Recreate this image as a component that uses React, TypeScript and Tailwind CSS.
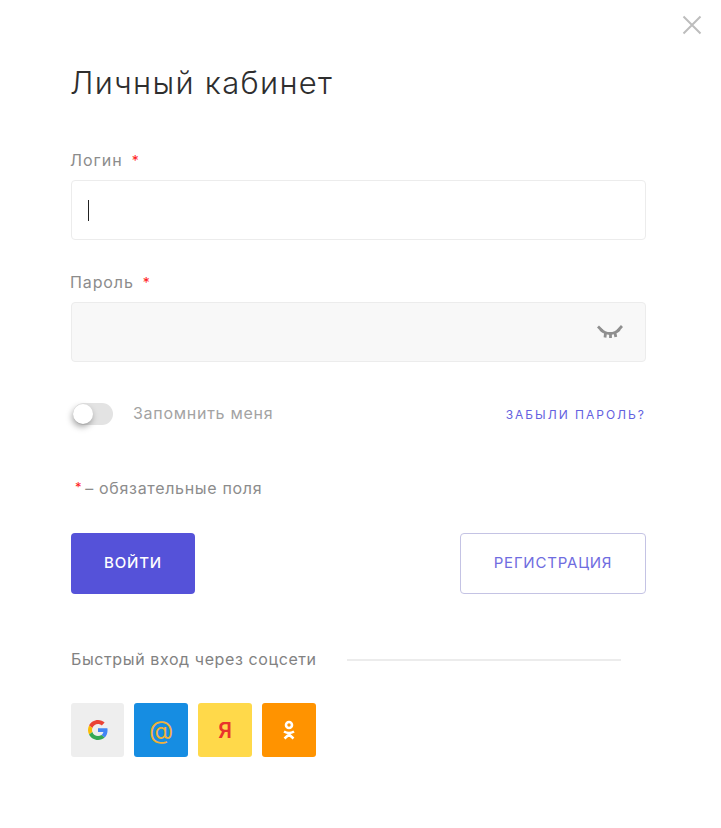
import React from 'react';

const CloseIcon = () => (
  <svg width="20" height="20" viewBox="0 0 20 20" fill="none" stroke="#bdbdbd" strokeWidth="2">
    <path d="M1.5 1.5 18.500 18.500M18.500 1.500 1.500 18.500" />
  </svg>
);

const EyeClosed = () => (
  <svg width="26" height="14" viewBox="0 0 26 14" fill="none" stroke="#8f8f8f" strokeWidth="2.800">
    <path d="M3.500 4.500c3 2.800 5.500 4 9.500 4s6.500-1.200 9.500-4" />
    <path d="M1 1.500 5.500 6M25 1 20.500 6M8.500 8 8 12.500M13.500 9v4M18 8l.8 4" />
  </svg>
);

const GoogleIcon = () => (
  <svg width="20" height="20" viewBox="0 0 48 48">
    <path fill="#EA4335" d="M24 9.500c3.500 0 6.700 1.300 9.100 3.500l6.800-6.800C35.800 2.400 30.200 0 24 0 14.600 0 6.500 5.400 2.600 13.200l7.900 6.200C12.400 13.600 17.700 9.500 24 9.500z" />
    <path fill="#4285F4" d="M46.900 24.500c0-1.600-.1-3.100-.4-4.500H24v9h12.900c-.6 3-2.300 5.500-4.800 7.200l7.700 6c4.500-4.200 7.100-10.300 7.100-17.700z" />
    <path fill="#FBBC05" d="M10.500 28.600c-.5-1.400-.8-3-.8-4.600s.3-3.200.8-4.600l-7.900-6.200C.9 16.500 0 20.100 0 24s.9 7.500 2.600 10.800l7.900-6.200z" />
    <path fill="#34A853" d="M24 48c6.500 0 11.900-2.100 15.900-5.800l-7.700-6c-2.200 1.400-4.900 2.300-8.200 2.300-6.300 0-11.600-4.200-13.500-9.900l-7.900 6.200C6.500 42.600 14.600 48 24 48z" />
  </svg>
);

const OkIcon = () => (
  <svg width="14" height="20" viewBox="0 0 14 20" fill="none" stroke="#fff" strokeWidth="2.600">
    <circle cx="7" cy="5" r="3" />
    <path d="M2 11.500c3 1.800 7 1.800 10 0M7 13v1.500M2.500 18.500 7 14.500l4.500 4" />
  </svg>
);

export default function App() {
  return (
    <div className="relative w-[721px] h-[828px] bg-white font-['Inter','Open_Sans',sans-serif] text-[#8c8c8c]">
      <button className="absolute top-[15px] right-[19px]">
        <CloseIcon />
      </button>

      <div className="pl-[71px] pr-[75px] pt-[64px]">
        <h1 className="-ml-[1px] text-[31px] leading-[38px] font-light text-[#2e2e2e] tracking-[1.300px]">Личный кабинет</h1>

        <div className="-ml-[1px] mt-[47px] h-[22px] flex items-center text-[16px] tracking-[1px]">
          Логин <span className="ml-[9px] text-[#ff2020] text-[14px]">*</span>
        </div>
        <div className="mt-[9px] h-[60px] rounded-[4px] border border-[#ececec] bg-white flex items-center pl-[16px]">
          <div className="w-px h-[21px] bg-[#222222]"></div>
        </div>

        <div className="-ml-[1px] mt-[31px] h-[22px] flex items-center text-[16px] tracking-[0.900px]">
          Пароль <span className="ml-[9px] text-[#ff2020] text-[14px]">*</span>
        </div>
        <div className="mt-[9px] h-[60px] rounded-[4px] border border-[#ececec] bg-[#f8f8f8] flex items-center justify-end pr-[22px]">
          <EyeClosed />
        </div>

        <div className="mt-[41px] h-[22px] flex items-center justify-between">
          <div className="flex items-center">
            <div className="relative w-[40px] h-[22px] ml-[2px] rounded-full bg-[#e3e3e3]">
              <div className="absolute top-[1px] left-0 w-[20px] h-[20px] rounded-full bg-white shadow-[-1px_3px_6px_rgba(0,0,0,0.35)]"></div>
            </div>
            <span className="ml-[20px] -mt-[2px] text-[16px] tracking-[0.720px] text-[#a3a3a3]">Запомнить меня</span>
          </div>
          <a className="mt-[1px] text-[12px] tracking-[2px] text-[#6461e0] uppercase">Забыли пароль?</a>
        </div>

        <div className="mt-[52px] h-[22px] flex items-center text-[16px] tracking-[0.680px] pl-[4px]">
          <span className="text-[#ff2020] text-[13px] mr-[3px]">*</span>– обязательные поля
        </div>

        <div className="mt-[34px] flex items-start justify-between">
          <button className="w-[124px] h-[61px] rounded-[4px] bg-[#5552d9] text-white text-[15px] font-medium tracking-[0.800px] uppercase">
            Войти
          </button>
          <button className="w-[186px] h-[61px] rounded-[4px] border border-[#c4c3e4] bg-white text-[#6f6ce0] text-[15px] tracking-[0.800px] uppercase">
            Регистрация
          </button>
        </div>

        <div className="mt-[54px] h-[22px] flex items-center">
          <span className="w-[276px] text-[16px] tracking-[0.600px] text-[#828282]">Быстрый вход через соцсети</span>
          <div className="mt-[2px] w-[274px] h-[2px] bg-[#ececec]"></div>
        </div>

        <div className="mt-[33px] flex">
          <div className="w-[53px] h-[54px] rounded-[3px] bg-[#eeeeee] flex items-center justify-center">
            <GoogleIcon />
          </div>
          <div className="ml-[10px] w-[54px] h-[54px] rounded-[3px] bg-[#168de2] flex items-center justify-center text-[#f0b23a] text-[25px] font-normal leading-none">
            @
          </div>
          <div className="ml-[10px] w-[54px] h-[54px] rounded-[3px] bg-[#ffd94a] flex items-center justify-center text-[#e9352c] text-[21px] font-semibold leading-none">
            Я
          </div>
          <div className="ml-[10px] w-[54px] h-[54px] rounded-[3px] bg-[#ff9300] flex items-center justify-center">
            <OkIcon />
          </div>
        </div>
      </div>
    </div>
  );
}
